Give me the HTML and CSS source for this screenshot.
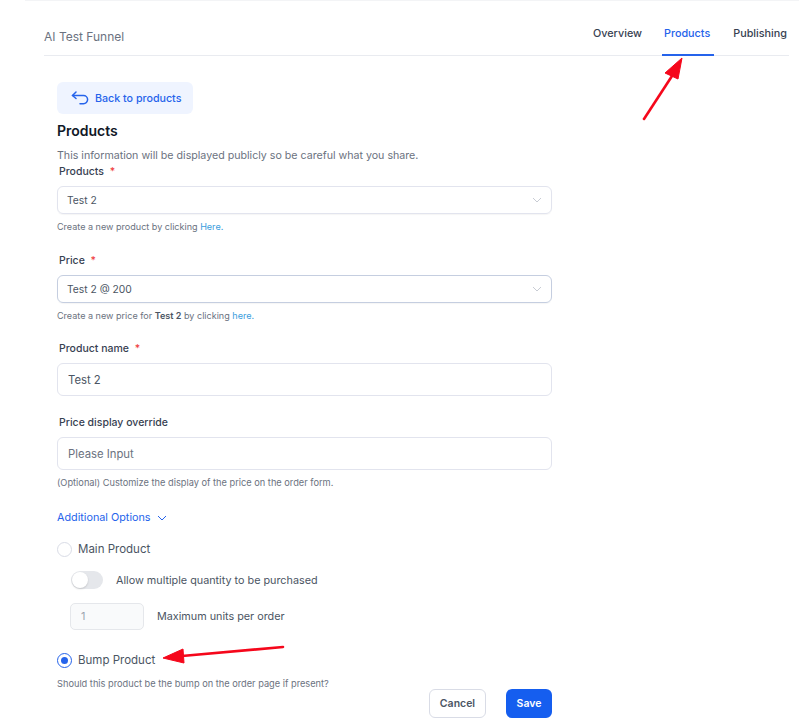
FILE: index.html
```html
<!DOCTYPE html>
<html lang="en">
<head>
    <meta charset="UTF-8">
    <title>AI Test Funnel - Products</title>
    <link rel="stylesheet" href="styles.css">
</head>
<body>
    <div class="top-strip"></div>
    <div class="nav">
        <span class="funnel-name">AI Test Funnel</span>
        <div class="tabs">
            <a class="tab">Overview</a>
            <a class="tab active">Products</a>
            <a class="tab">Publishing</a>
        </div>
    </div>

    <div class="form">
        <button class="back-btn">
            <svg width="18" height="14" viewBox="0 0 18 14" fill="none" stroke="#2563eb" stroke-width="1.5" stroke-linecap="round" stroke-linejoin="round">
                <path d="M5 1 1.5 4.5 5 7.5"/>
                <path d="M1.5 4.5H12.5a4 4 0 0 1 0 8.2H9"/>
            </svg>
            Back to products
        </button>
        <h2>Products</h2>
        <p class="intro">This information will be displayed publicly so be careful what you share.</p>

        <label class="field-label first">Products <span class="req">*</span></label>
        <div class="select">
            <span>Test 2</span>
            <svg width="10" height="6" viewBox="0 0 10 6" fill="none" stroke="#c8ccd4" stroke-width="1"><path d="M1 1l4 4 4-4"/></svg>
        </div>
        <p class="help">Create a new product by clicking <a>Here.</a></p>

        <label class="field-label price">Price <span class="req">*</span></label>
        <div class="select focused">
            <span>Test 2 @ 200</span>
            <svg width="10" height="6" viewBox="0 0 10 6" fill="none" stroke="#c8ccd4" stroke-width="1"><path d="M1 1l4 4 4-4"/></svg>
        </div>
        <p class="help">Create a new price for <b>Test 2</b> by clicking <a>here.</a></p>

        <label class="field-label name">Product name <span class="req">*</span></label>
        <input class="text-input" type="text" value="Test 2">

        <label class="field-label override">Price display override</label>
        <input class="text-input" type="text" placeholder="Please Input">
        <p class="help wide">(Optional) Customize the display of the price on the order form.</p>

        <div class="more">
            Additional Options
            <svg width="10" height="6" viewBox="0 0 10 6" fill="none" stroke="#2563eb" stroke-width="1"><path d="M1 1l4 4 4-4"/></svg>
        </div>

        <div class="radio-row main">
            <span class="radio"></span>
            Main Product
        </div>
        <div class="sub-row toggle-row">
            <span class="toggle"><span class="knob"></span></span>
            Allow multiple quantity to be purchased
        </div>
        <div class="sub-row units-row">
            <span class="units">1</span>
            Maximum units per order
        </div>
        <div class="radio-row bump">
            <span class="radio checked"></span>
            Bump Product
        </div>
        <p class="help wide bump-help">Should this product be the bump on the order page if present?</p>

        <div class="actions">
            <button class="btn cancel">Cancel</button>
            <button class="btn save">Save</button>
        </div>
    </div>

    <!-- red annotation arrows drawn over the screenshot -->
    <svg class="arrow arrow-tab" width="50" height="70" viewBox="0 0 50 70">
        <path d="M3 62 31 19" stroke="#f5071b" stroke-width="2.6" stroke-linecap="round"/>
        <path d="M41 1 24 16 37 22Z" fill="#f5071b" stroke="#f5071b"/>
    </svg>
    <svg class="arrow arrow-bump" width="126" height="24" viewBox="0 0 126 24">
        <path d="M20 11 121 2" stroke="#f5071b" stroke-width="2.6" stroke-linecap="round"/>
        <path d="M1 13 21 4 22 18Z" fill="#f5071b" stroke="#f5071b"/>
    </svg>
</body>
</html>
```

FILE: styles.css
```css
* {
    margin: 0;
    padding: 0;
    box-sizing: border-box;
}

body {
    font-family: Inter, "Noto Sans", sans-serif;
    background: white;
    color: #374151;
    height: 728px;
    overflow: hidden;
    position: relative;
}

.top-strip {
    height: 1px;
    margin-left: 25px;
    background: #f3f4f6;
}

.nav {
    display: flex;
    justify-content: space-between;
    height: 55px;
    margin: 0 10px 0 44px;
    border-bottom: 1px solid #e9ebf0;
}

.funnel-name {
    font-size: 12px;
    color: #6b7280;
    line-height: 16px;
    margin-top: 28px;
}

.tabs {
    display: flex;
    gap: 18px;
}

.tab {
    font-size: 10.8px;
    font-weight: 500;
    color: #374151;
    line-height: 14px;
    padding: 26px 2px 0;
    height: 55px;
}

.tab.active {
    color: #2563eb;
    border-bottom: 2px solid #2563eb;
    padding-right: 4px;
    margin-right: -1px;
}

.form {
    margin: 26px 0 0 57px;
    width: 495px;
}

.back-btn {
    display: flex;
    align-items: center;
    gap: 6px;
    width: 136px;
    height: 32px;
    padding-left: 14px;
    border: none;
    border-radius: 6px;
    background: #eff4ff;
    color: #2563eb;
    font: 500 10.7px Inter, sans-serif;
}

h2 {
    font-size: 14px;
    font-weight: 600;
    color: #111827;
    line-height: 20px;
    margin-top: 7px;
}

.intro {
    font-size: 10.65px;
    color: #6b7280;
    line-height: 14px;
    margin-top: 8px;
}

.field-label {
    display: block;
    font-size: 10.5px;
    font-weight: 500;
    color: #374151;
    line-height: 14px;
    margin-bottom: 7px;
    padding-left: 2px;
}

.field-label.first {
    margin-top: 2px;
}

.field-label.price {
    margin-top: 21px;
}

.field-label.name {
    margin-top: 20px;
}

.field-label.override {
    margin-top: 20px;
}

.req {
    color: #ef4444;
    margin-left: 3px;
}

.select {
    display: flex;
    justify-content: space-between;
    align-items: center;
    height: 28px;
    padding: 0 9px;
    border: 1px solid #e2e4ee;
    border-radius: 6px;
    font-size: 10.3px;
    color: #4b5563;
    box-shadow: 0 1px 1px rgba(0, 0, 0, 0.04);
}

.select.focused {
    border-color: #c5cee0;
}

.help {
    font-size: 9.05px;
    color: #6b7280;
    line-height: 12px;
    margin-top: 7px;
}

.help.wide {
    font-size: 9.24px;
}

.help a {
    color: #3b9ddd;
}

.help b {
    font-weight: 600;
    color: #4b5563;
}

.text-input {
    display: block;
    width: 100%;
    height: 33px;
    padding: 0 10px;
    border: 1px solid #e2e4ee;
    border-radius: 6px;
    font: 11.3px Inter, sans-serif;
    color: #4b5563;
    outline: none;
}

.text-input::placeholder {
    color: #6b7280;
}

.more {
    display: flex;
    align-items: center;
    gap: 6px;
    font-size: 10.8px;
    color: #2563eb;
    line-height: 14px;
    margin-top: 22px;
}

.radio-row {
    display: flex;
    align-items: center;
    gap: 6px;
    font-size: 11.5px;
    color: #4b5563;
    height: 16px;
}

.radio-row.main {
    margin-top: 16px;
}

.radio-row.bump {
    margin-top: 22px;
}

.radio {
    width: 15px;
    height: 15px;
    border: 1px solid #d9dce6;
    border-radius: 50%;
    background: white;
}

.radio.checked {
    border-color: #2563eb;
    position: relative;
}

.radio.checked::after {
    content: "";
    position: absolute;
    top: 3px;
    left: 3px;
    width: 7px;
    height: 7px;
    border-radius: 50%;
    background: #2563eb;
}

.sub-row {
    display: flex;
    align-items: center;
    font-size: 10.8px;
    color: #4b5563;
    margin-left: 13px;
}

.toggle-row {
    gap: 13px;
    height: 18px;
    margin-left: 14px;
    margin-top: 14px;
}

.toggle {
    position: relative;
    width: 32px;
    height: 18px;
    border-radius: 9px;
    background: #e5e7eb;
}

.knob {
    position: absolute;
    top: 1px;
    left: 1px;
    width: 16px;
    height: 16px;
    border-radius: 50%;
    background: white;
    box-shadow: 0 1px 2px rgba(0, 0, 0, 0.15);
}

.units-row {
    gap: 13px;
    margin-top: 14px;
}

.units {
    width: 74px;
    height: 27px;
    padding-left: 10px;
    line-height: 25px;
    border: 1px solid #e5e7eb;
    border-radius: 5px;
    background: #f9fafb;
    color: #9ca3af;
}

.bump-help {
    margin-top: 10px;
}

.actions {
    display: flex;
    justify-content: flex-end;
    gap: 20px;
    margin-top: -1px;
}

.btn {
    height: 29px;
    border-radius: 6px;
    font: 600 10.5px Inter, sans-serif;
}

.cancel {
    width: 57px;
    background: white;
    border: 1px solid #d9dce6;
    color: #4b5563;
}

.save {
    width: 46px;
    background: #155eef;
    border: none;
    color: white;
}

.arrow {
    position: absolute;
}

.arrow-tab {
    left: 641px;
    top: 57px;
}

.arrow-bump {
    left: 162px;
    top: 645px;
}
```
